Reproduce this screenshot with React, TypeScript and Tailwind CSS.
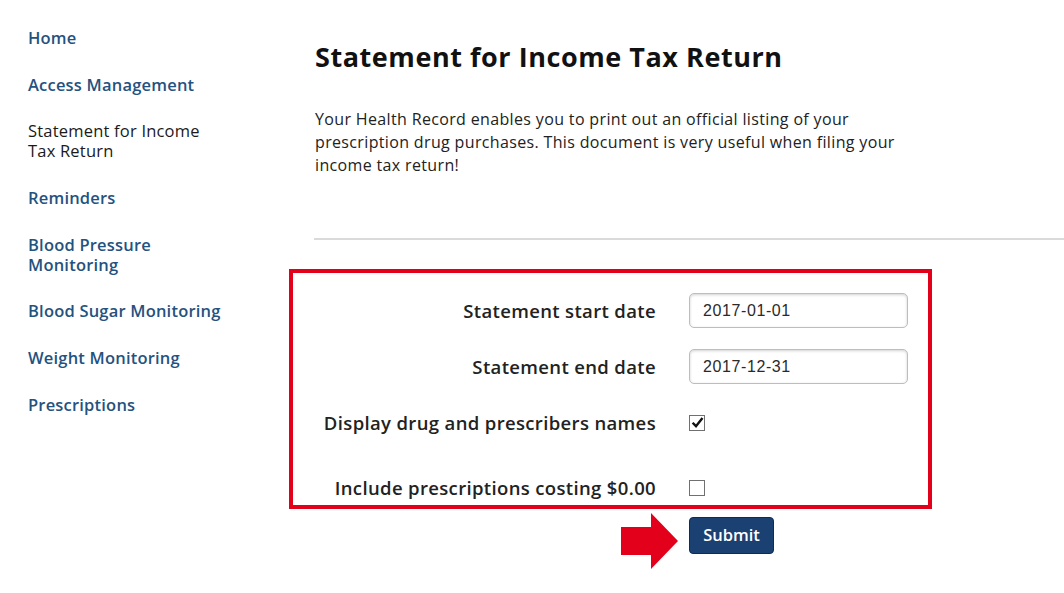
import React from "react";

const navItems: { label: string; active?: boolean }[] = [
  { label: "Home" },
  { label: "Access Management" },
  { label: "Statement for Income Tax Return", active: true },
  { label: "Reminders" },
  { label: "Blood Pressure Monitoring" },
  { label: "Blood Sugar Monitoring" },
  { label: "Weight Monitoring" },
  { label: "Prescriptions" },
];

function Checkbox({ checked }: { checked?: boolean }) {
  return (
    <div className="w-[16px] h-[16px] border border-[#707070] bg-white flex items-center justify-center">
      {checked && (
        <svg width="13" height="13" viewBox="0 0 12 12">
          <path d="M1.5 6.2 L4.6 9.4 L10.6 1.8" fill="none" stroke="#111" strokeWidth="2.2" />
        </svg>
      )}
    </div>
  );
}

function DateInput({ value }: { value: string }) {
  return (
    <div className="w-[219px] h-[35px] rounded-[5px] border border-[#bdbdbd] bg-white shadow-[inset_0_1px_3px_rgba(0,0,0,0.18)] flex items-center pl-[13px] font-['Liberation_Sans',Arial,sans-serif] font-normal text-[16px] tracking-[0.6px] text-[#2a2a2a]">
      {value}
    </div>
  );
}

export default function App() {
  return (
    <div className="flex min-h-[593px] w-[1064px] bg-white font-['Open_Sans',sans-serif] overflow-hidden">
      <nav className="w-[289px] shrink-0 pl-[28px] pt-[28px] flex flex-col gap-[26.7px]">
        {navItems.map((it) => (
          <div
            key={it.label}
            className={
              "w-[198px] text-[16.5px] leading-[20px] tracking-[0.2px] " +
              (it.active ? "text-[#1a1a1a] font-medium" : "text-[#24527f] font-semibold")
            }
          >
            {it.label}
          </div>
        ))}
      </nav>
      <main className="flex-1 pt-[41px]">
        <h1 className="pl-[26px] text-[27px] leading-[32px] font-bold text-[#111] tracking-[0.55px]">
          Statement for Income Tax Return
        </h1>
        <p className="pl-[26px] mt-[35px] w-[612px] text-[16px] leading-[23px] text-[#222] tracking-[0.35px]">
          Your Health Record enables you to print out an official listing of your prescription drug purchases. This
          document is very useful when filing your income tax return!
        </p>
        <div className="ml-[25px] mt-[61px] h-[2px] bg-[#dadada]" />
        <div className="mt-[29px] w-[643px] border-[4px] border-[#e3001b] pt-[20px]">
          <div className="grid grid-cols-[363px_219px] gap-x-[33px] text-[18.5px] tracking-[0.35px] font-semibold text-[#222]">
            <div className="h-[35px] flex items-center justify-end">Statement start date</div>
            <DateInput value="2017-01-01" />
            <div className="h-[35px] mt-[21px] flex items-center justify-end">Statement end date</div>
            <div className="mt-[21px]">
              <DateInput value="2017-12-31" />
            </div>
            <div className="h-[35px] mt-[21px] flex items-center justify-end">Display drug and prescribers names</div>
            <div className="h-[35px] mt-[21px] flex items-center">
              <Checkbox checked />
            </div>
            <div className="h-[35px] mt-[30px] flex items-center justify-end">Include prescriptions costing $0.00</div>
            <div className="h-[35px] mt-[30px] flex items-center">
              <Checkbox />
            </div>
          </div>
        </div>
        <div className="flex items-start pl-[332px] mt-[4px] gap-[11px]">
          <svg width="57" height="56" viewBox="0 0 57 56">
            <polygon points="0,14 30,14 30,0 57,28 30,56 30,42 0,42" fill="#e3001b" />
          </svg>
          <button className="mt-[4px] w-[85px] h-[37px] rounded-[4px] bg-[#1b4173] border border-[#0f2c52] text-white text-[16.5px] font-semibold">
            Submit
          </button>
        </div>
      </main>
    </div>
  );
}
